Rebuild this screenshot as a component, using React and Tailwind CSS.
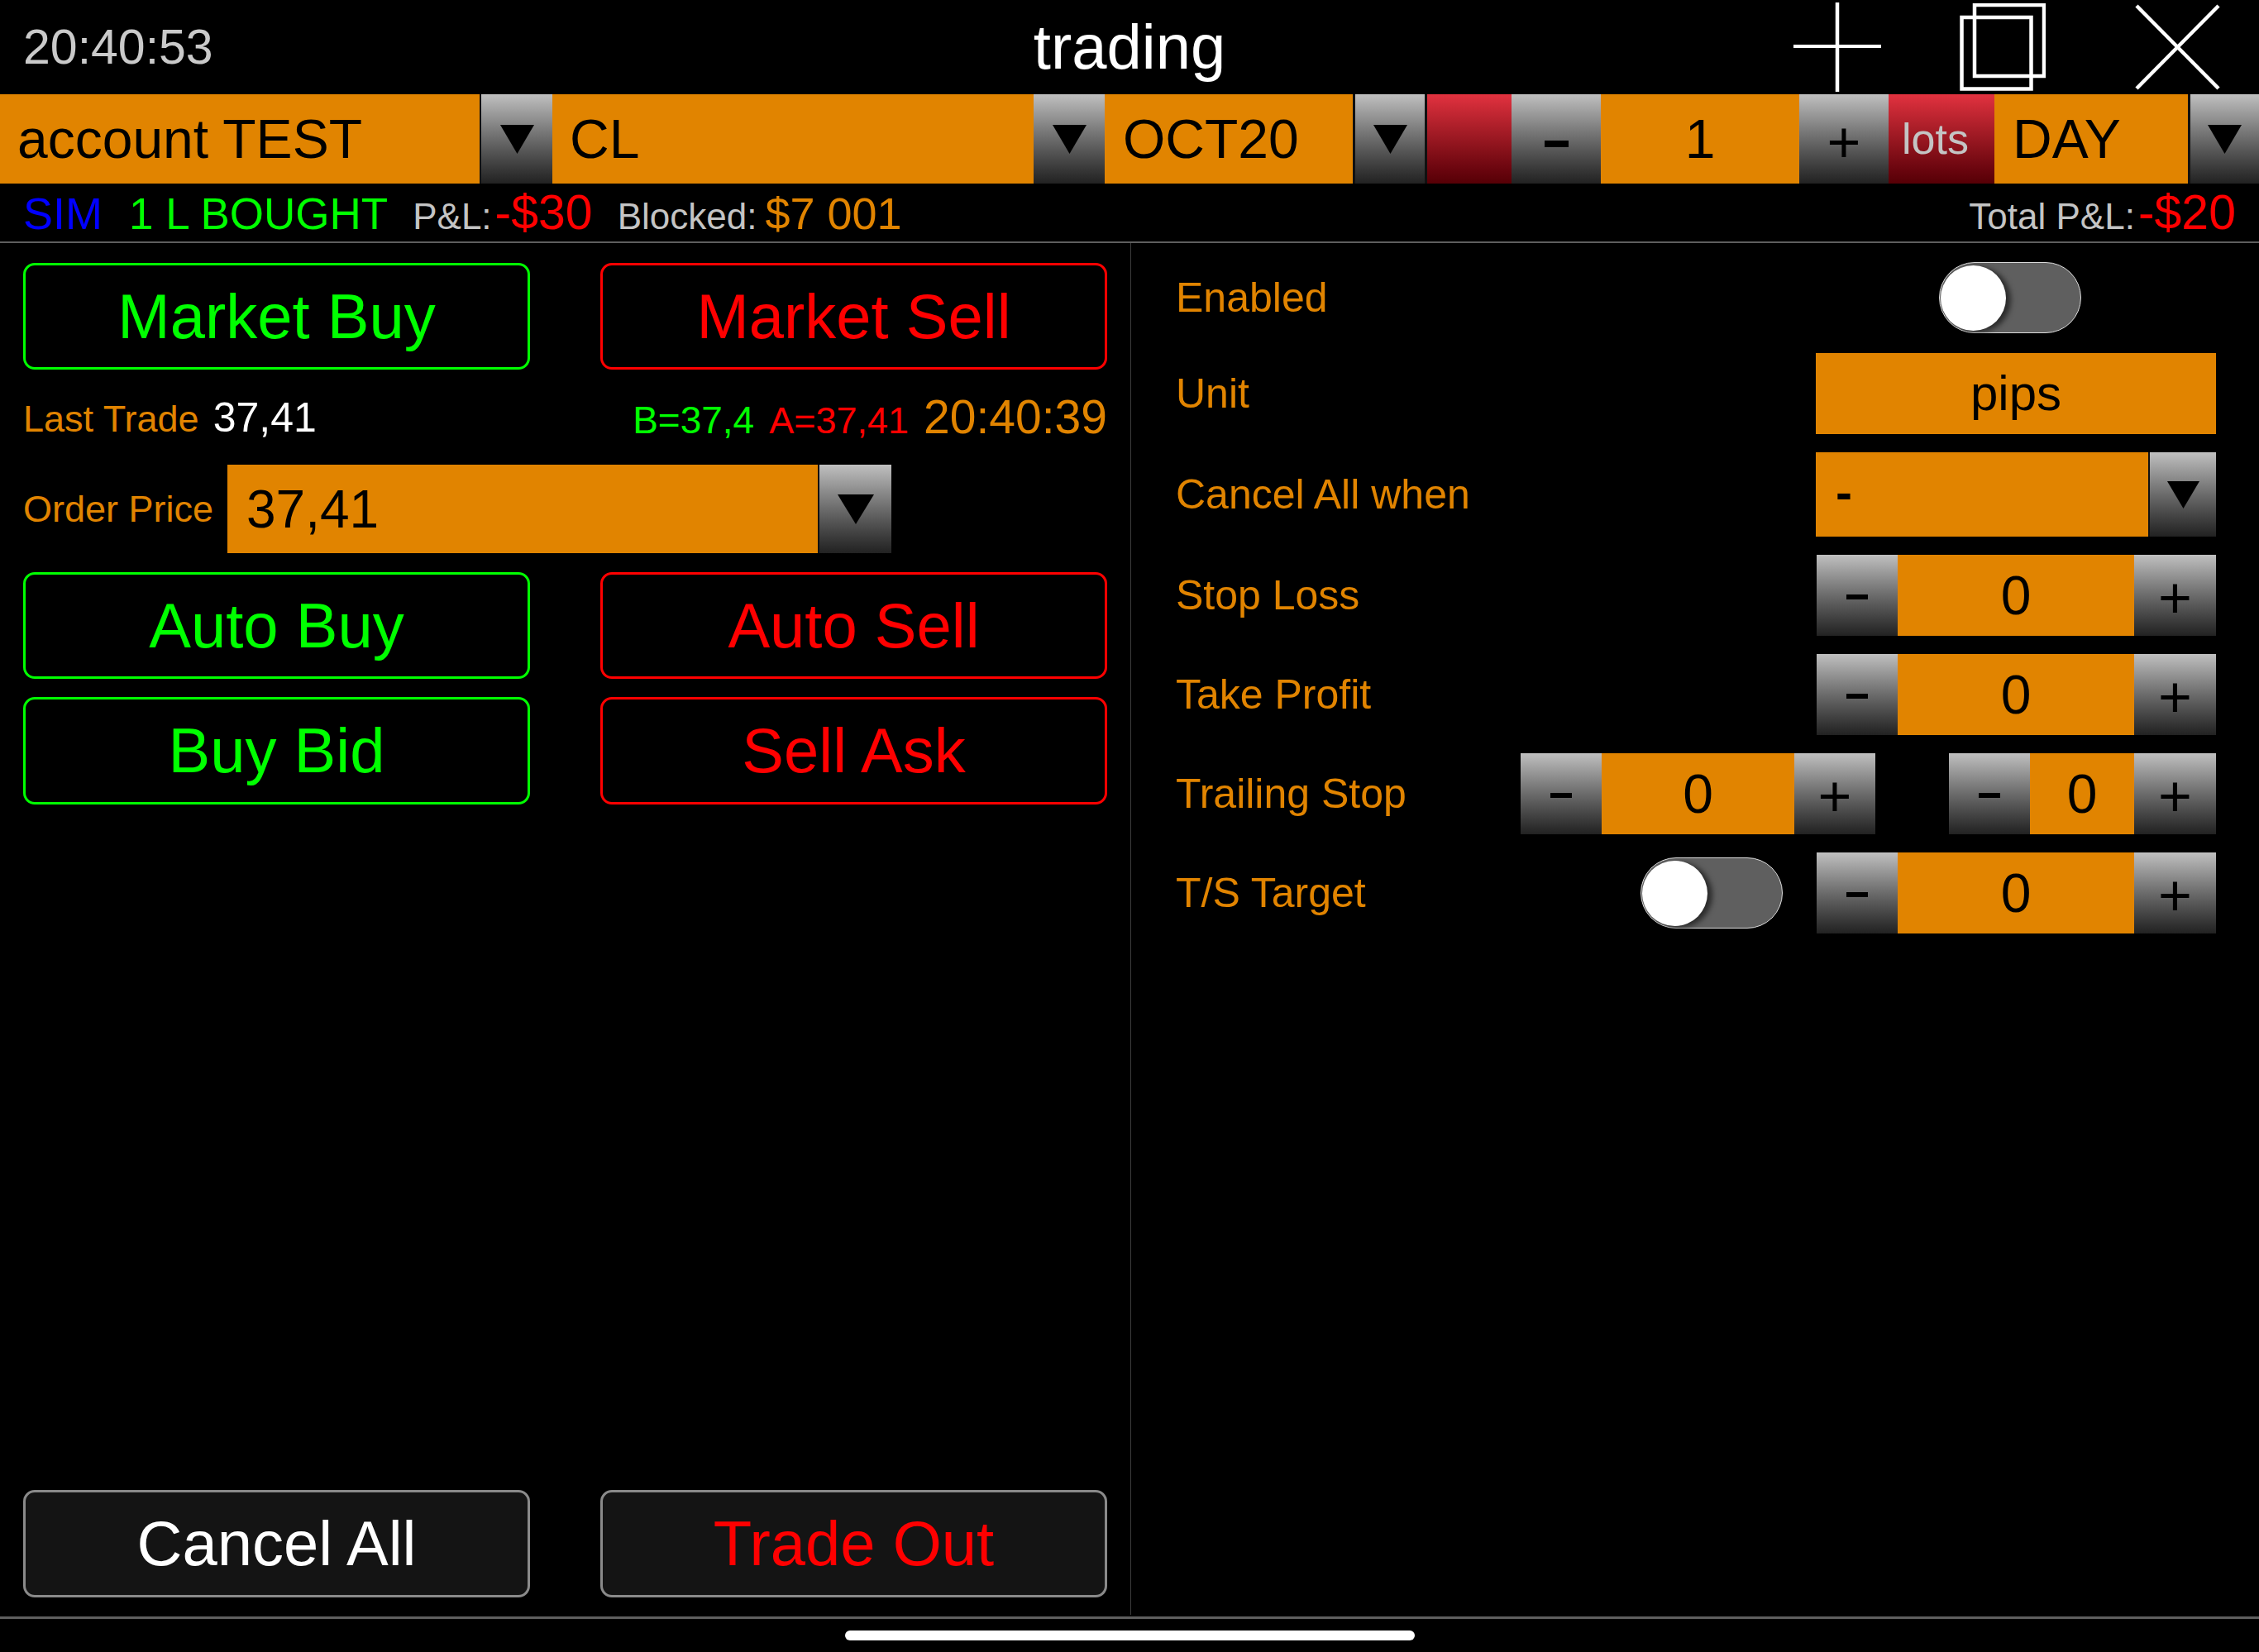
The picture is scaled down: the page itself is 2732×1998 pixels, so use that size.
import React from 'react';

function Arrow({ w = 41, h = 35 }) {
  return (
    <svg width={w} height={h} viewBox={`0 0 ${w} ${h}`}>
      <polygon points={`0,0 ${w},0 ${w / 2},${h}`} fill="#000" />
    </svg>
  );
}

function GrayBox({ className = '', children }) {
  return (
    <div className={`flex items-center justify-center bg-linear-to-b from-[#c0c0c0] to-[#222222] text-black leading-none ${className}`}>
      {children}
    </div>
  );
}

// thick short dash used on the "-" buttons
function Minus({ className = 'w-[26px] h-[6px]' }) {
  return <span className={`block bg-black ${className}`} />;
}

function Stepper({ mid = 'w-[286px]', left = 'w-[98px]', right = 'w-[99px]' }) {
  return (
    <div className="flex h-[98px]">
      <GrayBox className={`${left} pt-[4px]`}><Minus /></GrayBox>
      <div className={`${mid} flex items-center justify-center bg-[#e18400] text-[66px] leading-none text-black`}>0</div>
      <GrayBox className={`${right} text-[70px] pt-[6px]`}>+</GrayBox>
    </div>
  );
}

function Toggle() {
  return (
    <div className="w-[172px] h-[86px] rounded-full bg-[#5f5f5f] border-[1.5px] border-[#dcdcdc] flex items-center pl-[1px]">
      <div className="w-[79px] h-[79px] rounded-full bg-white shadow-[6px_2px_6px_rgba(0,0,0,0.55)]" />
    </div>
  );
}

function Btn({ color, children }) {
  const styles = {
    green: 'border-[#00ff00] text-[#00ff00] bg-black',
    red: 'border-[#ff0000] text-[#ff0000] bg-black',
    grayWhite: 'border-[#8a8a8a] text-white bg-[#141414]',
    grayRed: 'border-[#8a8a8a] text-[#ff0000] bg-[#141414]',
  };
  return (
    <div className={`flex items-center justify-center rounded-[14px] border-[3px] text-[76px] leading-none ${styles[color]}`}>
      {children}
    </div>
  );
}

function Row({ label, className = 'h-[100px]', children }) {
  return (
    <div className={`flex items-center justify-between ${className}`}>
      <span className="text-[50px] leading-none text-[#e18400]">{label}</span>
      <div className="flex items-center">{children}</div>
    </div>
  );
}

export default function App() {
  return (
    <div className="w-[2732px] h-[1998px] bg-black flex flex-col overflow-hidden font-['Liberation_Sans',Arial,sans-serif]">
      {/* Title bar */}
      <div className="h-[114px] grid grid-cols-[1fr_auto_1fr] items-center">
        <div className="pl-[28px] text-[59px] text-[#cacaca]">20:40:53</div>
        <div className="text-[76px] text-white">trading</div>
        <div className="flex justify-end items-center pr-[47px]">
          <svg width="106" height="108" viewBox="0 0 106 108">
            <line x1="53" y1="0" x2="53" y2="108" stroke="#fff" strokeWidth="4.5" />
            <line x1="0" y1="53" x2="106" y2="53" stroke="#fff" strokeWidth="4" />
          </svg>
          <svg className="ml-[95px]" width="104" height="106" viewBox="0 0 104 106">
            <rect x="18" y="2" width="84" height="86" fill="none" stroke="#fff" strokeWidth="4.5" />
            <rect x="2.5" y="17" width="84" height="86.5" fill="none" stroke="#fff" strokeWidth="4.5" />
          </svg>
          <svg className="ml-[108px]" width="103" height="104" viewBox="0 0 103 104">
            <line x1="2" y1="2" x2="101" y2="102" stroke="#fff" strokeWidth="4.5" />
            <line x1="101" y1="2" x2="2" y2="102" stroke="#fff" strokeWidth="4.5" />
          </svg>
        </div>
      </div>

      {/* Order selector bar */}
      <div className="h-[108px] flex text-black text-[66px] leading-none">
        <div className="w-[580px] bg-[#e18400] flex items-center pl-[21px]">account TEST</div>
        <GrayBox className="w-[88px] border-l-2 border-[#111]"><Arrow /></GrayBox>
        <div className="w-[582px] bg-[#e18400] flex items-center pl-[21px]">CL</div>
        <GrayBox className="w-[86px]"><Arrow /></GrayBox>
        <div className="w-[300px] bg-[#e18400] flex items-center pl-[22px]">OCT20</div>
        <GrayBox className="w-[90px] border-x-[3px] border-[#111]"><Arrow /></GrayBox>
        <div className="w-[102px] bg-linear-to-b from-[#e2323f] to-[#560006]" />
        <GrayBox className="w-[108px] pt-[12px]"><Minus className="w-[29px] h-[8px]" /></GrayBox>
        <div className="w-[240px] bg-[#e18400] flex items-center justify-center">1</div>
        <GrayBox className="w-[108px] text-[70px] pt-[8px]">+</GrayBox>
        <div className="w-[128px] bg-linear-to-b from-[#e2323f] to-[#560006] flex items-center pl-[16px] text-[52px] text-[#c4c4c4]">lots</div>
        <div className="w-[234px] bg-[#e18400] flex items-center pl-[22px]">DAY</div>
        <GrayBox className="w-[86px] border-l-[3px] border-[#111]"><Arrow /></GrayBox>
      </div>

      {/* Status line */}
      <div className="h-[70px] flex items-center justify-between px-[28px]">
        <div className="leading-none whitespace-nowrap">
          <span className="text-[54px] text-[#0000ff]">SIM</span>
          <span className="ml-[32px] text-[53px] text-[#00ff00]">1 L BOUGHT</span>
          <span className="ml-[30px] text-[44px] text-[#c4c4c4]">P&amp;L:</span>
          <span className="ml-[4px] text-[59px] text-[#ff0000]">-$30</span>
          <span className="ml-[30px] text-[44px] text-[#c4c4c4]">Blocked:</span>
          <span className="ml-[10px] text-[54px] text-[#e18400]">$7 001</span>
        </div>
        <div className="leading-none whitespace-nowrap">
          <span className="text-[44px] text-[#c4c4c4]">Total P&amp;L:</span>
          <span className="ml-[4px] text-[59px] text-[#ff0000]">-$20</span>
        </div>
      </div>
      <div className="h-[2px] bg-[#5e5e5e]" />

      {/* Main */}
      <div className="flex-1 flex">
        {/* Left: order buttons */}
        <div className="w-[1367px] flex flex-col px-[28px] pt-[24px] pb-[23px]">
          <div className="grid grid-cols-2 gap-x-[85px] h-[129px]">
            <Btn color="green">Market Buy</Btn>
            <Btn color="red">Market Sell</Btn>
          </div>
          <div className="h-[115px] flex items-center justify-between leading-none whitespace-nowrap">
            <div>
              <span className="text-[45px] text-[#e18400]">Last Trade</span>
              <span className="ml-[17px] text-[50px] text-white">37,41</span>
            </div>
            <div>
              <span className="text-[46px] text-[#00ff00]">B=37,4</span>
              <span className="ml-[18px] text-[45px] text-[#ff0000]">A=37,41</span>
              <span className="ml-[18px] text-[57px] text-[#e18400]">20:40:39</span>
            </div>
          </div>
          <div className="h-[107px] flex items-stretch">
            <div className="flex items-center text-[45px] leading-none text-[#e18400] w-[247px]">Order Price</div>
            <div className="w-[714px] bg-[#e18400] flex items-center pl-[23px] text-[64px] leading-none text-black">37,41</div>
            <GrayBox className="w-[89px] border-l-2 border-[#111]"><Arrow w={44} h={36} /></GrayBox>
          </div>
          <div className="grid grid-cols-2 gap-x-[85px] h-[129px] mt-[23px]">
            <Btn color="green">Auto Buy</Btn>
            <Btn color="red">Auto Sell</Btn>
          </div>
          <div className="grid grid-cols-2 gap-x-[85px] h-[130px] mt-[22px]">
            <Btn color="green">Buy Bid</Btn>
            <Btn color="red">Sell Ask</Btn>
          </div>
          <div className="flex-1" />
          <div className="grid grid-cols-2 gap-x-[85px] h-[130px]">
            <Btn color="grayWhite">Cancel All</Btn>
            <Btn color="grayRed">Trade Out</Btn>
          </div>
        </div>

        <div className="w-px bg-[#3c3c3c] mb-[2px]" />

        {/* Right: brackets */}
        <div className="flex-1 flex flex-col pl-[54px] pr-[52px] pt-[12px] gap-[20px]">
          <Row label="Enabled" className="h-[100px] pt-[8px]">
            <div className="w-[484px] flex justify-center pr-[14px]">
              <Toggle />
            </div>
          </Row>
          <Row label="Unit">
            <div className="w-[484px] h-[98px] bg-[#e18400] flex items-center justify-center text-[60px] leading-none text-black">pips</div>
          </Row>
          <Row label="Cancel All when" className="h-[104px]">
            <div className="w-[484px] h-[102px] flex">
              <div className="flex-1 bg-[#e18400] flex items-center pl-[24px] text-[60px] font-bold leading-none text-black pb-[4px]">-</div>
              <GrayBox className="w-[82px] border-l-2 border-[#111]"><Arrow w={39} h={33} /></GrayBox>
            </div>
          </Row>
          <Row label="Stop Loss">
            <Stepper />
          </Row>
          <Row label="Take Profit">
            <Stepper />
          </Row>
          <Row label="Trailing Stop">
            <Stepper mid="w-[233px]" right="w-[98px]" />
            <div className="ml-[89px]">
              <Stepper mid="w-[126px]" />
            </div>
          </Row>
          <Row label="T/S Target">
            <Toggle />
            <div className="ml-[41px]">
              <Stepper />
            </div>
          </Row>
        </div>
      </div>

      <div className="h-[3px] bg-[#5e5e5e]" />
      <div className="h-[40px] flex items-center justify-center">
        <div className="w-[689px] h-[12px] rounded-full bg-white" />
      </div>
    </div>
  );
}
